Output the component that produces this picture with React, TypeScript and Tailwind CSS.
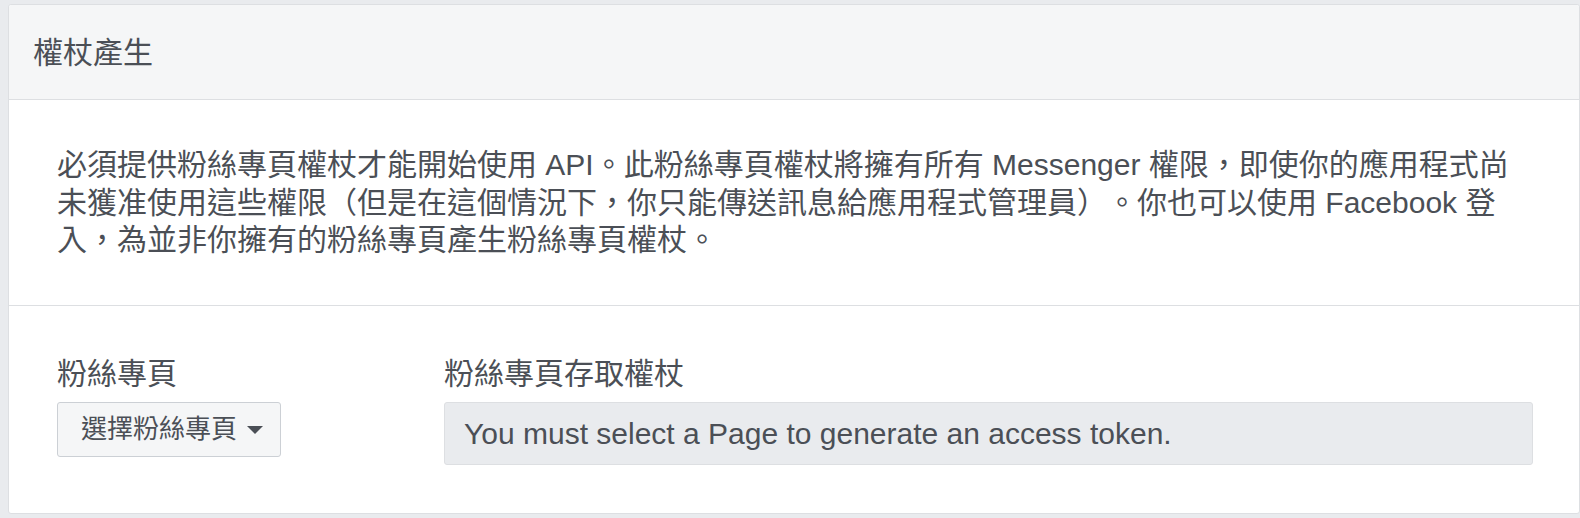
export default function App() {
  const font = { fontFamily: '"Liberation Sans", "Noto Sans CJK TC", sans-serif' };

  return (
    <div className="min-h-[518px] bg-[#e9ebee] pt-[4px] pb-[4px] pl-[8px]" style={font}>
      <div className="rounded-[3px] border border-[#dddfe2] bg-white">
        {/* Header */}
        <div className="flex h-[95px] items-center rounded-t-[3px] border-b border-[#dddfe2] bg-[#f5f6f7] px-6">
          <h2 className="text-[30px] leading-[37px] text-[#4b4f56]">權杖產生</h2>
        </div>

        {/* Description */}
        <div className="border-b border-[#dddfe2] pl-12 pr-[40px] pt-[46px] pb-[46px]">
          <p className="text-[30px] leading-[37.5px] text-[#4b4f56] [text-spacing-trim:space-all]">
            必須提供粉絲專頁權杖才能開始使用 API。此粉絲專頁權杖將擁有所有 Messenger 權限，即使你的應用程式尚
            <br />
            未獲准使用這些權限（但是在這個情況下，你只能傳送訊息給應用程式管理員）。你也可以使用 Facebook 登
            <br />
            入，為並非你擁有的粉絲專頁產生粉絲專頁權杖。
          </p>
        </div>

        {/* Token form */}
        <div className="flex pl-12 pr-[46px] pt-[49px] pb-[48px]">
          <div className="w-[387px] shrink-0">
            <div className="mb-[10px] text-[30px] leading-[37.5px] text-[#4b4f56]">粉絲專頁</div>
            <button className="flex h-[55px] items-center gap-[10px] rounded-[3px] border border-[#ccd0d5] bg-[#f5f6f7] pl-[23px] pr-[17px] text-[26px] text-[#4b4f56]">
              選擇粉絲專頁
              <svg width="16" height="8" viewBox="0 0 16 8">
                <path d="M0 0 L16 0 L8 8 Z" fill="#4b4f56" />
              </svg>
            </button>
          </div>
          <div className="flex-1">
            <div className="mb-[10px] text-[30px] leading-[37.5px] text-[#4b4f56]">粉絲專頁存取權杖</div>
            <div className="flex h-[63px] items-center rounded-[3px] border border-[#dddfe2] bg-[#e9ebee] px-[19px] text-[30px] text-[#4b4f56]">
              You must select a Page to generate an access token.
            </div>
          </div>
        </div>
      </div>
    </div>
  );
}
